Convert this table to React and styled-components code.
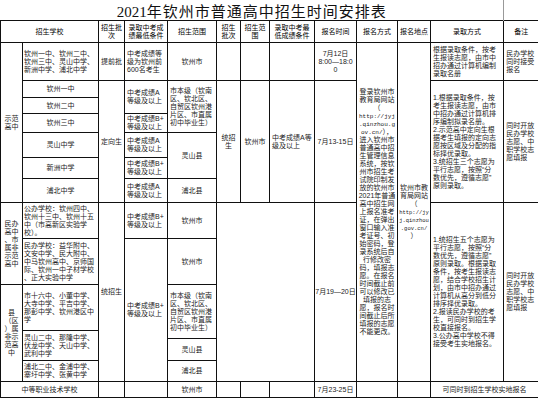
import { Fragment } from "react";
import styled, { createGlobalStyle } from "styled-components";

const GlobalStyle = createGlobalStyle`
body{
margin:0;
background:#fff;
}
`;

const Sheet = styled.table`
border-collapse:collapse;
table-layout:fixed;
width:538px;
font-family:"Liberation Sans","Noto Sans CJK SC",sans-serif;
font-size:7px;
line-height:8px;
color:#222;
`;

const Col = styled.col`
width:${(p) => p.$w}px;
`;

const Row = styled.tr`
height:${(p) => p.$h}px;
`;

const Cell = styled.td`
border:1px solid #111;
padding:0 ${(p) => (p.$pad ?? 2)}px;
text-align:${(p) => p.$align || "center"};
vertical-align:middle;
white-space:nowrap;
overflow:hidden;
`;

const Head = styled(Cell)`
color:#000;
`;

const TitleCell = styled.td`
border:none;
border-right:1px solid #999;
padding:5px 0 0;
text-align:center;
vertical-align:top;
font-family:"Liberation Serif","Noto Sans CJK SC",serif;
font-size:15px;
line-height:15px;
letter-spacing:1px;
color:#111;
`;

const BlankTitle = styled.td`
border:none;
`;

const Year = styled.span`
letter-spacing:0;
`;

const Url = styled.span`
font-family:"Liberation Mono",monospace;
font-size:${(p) => p.$size || 6}px;
line-height:6px;
`;

const lines = (arr) =>
  arr.map((t, i) => (
    <Fragment key={i}>
      {i > 0 && <br />}
      {t}
    </Fragment>
  ));

const widths = [22, 76, 26, 43, 49, 24, 29, 45, 42, 41, 33, 73, 35];

const signupWay = [
  "登录钦州市",
  "教育局网站",
  "（",
  <Url>http://jyj</Url>,
  <Url>.qinzhou.g</Url>,
  <><Url>ov.cn/</Url>），</>,
  "进入钦州市",
  "普通高中招",
  "生管理信息",
  "系统，按钦",
  "州市招生考",
  "试院印制发",
  "放的钦州市",
  "2021年普通",
  "高中招生网",
  "上报名准考",
  "证，在弹出",
  "窗口输入准",
  "考证号、初",
  "始密码，登",
  "录系统后自",
  "行修改密",
  "码，填报志",
  "愿。在报名",
  "时间截止前",
  "可以修改已",
  "填报的志",
  "愿，报名时",
  "间截止后所",
  "填报的志愿",
  "不能更改。",
];

const signupPlace = [
  "钦州市教",
  "育局网站",
  "（",
  <Url $size={5.5}>http://jy</Url>,
  <Url $size={5.5}>j.qinzhou</Url>,
  <Url $size={5.5}>.gov.cn/</Url>,
  "）",
];

const earlyRule = ["根据录取条件，按考", "生报读志愿，由市中", "招办通过计算机编制", "录取名册"];

const keyRule = [
  "1.根据录取条件，按",
  "考生报读志愿，由市",
  "中招办通过计算机排",
  "序编制拟录名册。",
  "2.示范高中定向生根",
  "据考生填报的定向志",
  "愿按区域及分配的指",
  "标择优录取。",
  "3.统招生三个志愿为",
  "平行志愿，按照“分",
  "数优先，遵循志愿”",
  "原则录取。",
];

const generalRule = [
  "1.统招生五个志愿为",
  "平行志愿，按照“分",
  "数优先，遵循志愿”",
  "原则录取。根据录取",
  "条件，按考生报读志",
  "愿，结合学校招生计",
  "划，由市中招办通过",
  "计算机从高分到低分",
  "排序择优录取。",
  "2.报读民办学校的考",
  "生，可同时到招生学",
  "校直接报名。",
  "3.公办高中学校不得",
  "接受考生实地报名。",
];

const openNote = ["同时开放", "民办学校", "志愿、中", "职学校志", "愿填报"];
const gradeA = ["中考成绩A", "等级及以上"];
const gradeB = ["中考成绩B+", "等级及以上"];
const cityLevel = ["市本级（钦南", "区、钦北区、", "自贸区钦州港", "片区、市直属", "初中毕业生）"];

function App() {
  return (
    <>
      <GlobalStyle />
      <Sheet>
        <colgroup>
          {widths.map((w, i) => (
            <Col key={i} $w={w} />
          ))}
        </colgroup>
        <tbody>
          <Row $h={20}>
            <TitleCell colSpan={12}>
              <Year>2021</Year>年钦州市普通高中招生时间安排表
            </TitleCell>
            <BlankTitle />
          </Row>

          <Row $h={22}>
            <Head colSpan={2}>招生学校</Head>
            <Head $pad={1}>{lines(["招生批", "次"])}</Head>
            <Head>{lines(["录取中考成", "绩最低条件"])}</Head>
            <Head>招生范围</Head>
            <Head $pad={1}>{lines(["招生", "批次"])}</Head>
            <Head $pad={1}>{lines(["招生范", "围"])}</Head>
            <Head>{lines(["录取中考最", "低成绩条件"])}</Head>
            <Head>报名时间</Head>
            <Head>报名方式</Head>
            <Head $pad={1}>报名地点</Head>
            <Head>录取方式</Head>
            <Head>备注</Head>
          </Row>

          <Row $h={38}>
            <Cell rowSpan={7}>{lines(["示范", "高中"])}</Cell>
            <Cell $align="left" $pad={1}>
              {lines(["钦州一中、钦州二中、", "钦州三中、灵山中学、", "新洲中学、浦北中学"])}
            </Cell>
            <Cell $pad={1}>提前批</Cell>
            <Cell $align="left">{lines(["中考成绩等", "级为钦州前", "600名考生"])}</Cell>
            <Cell>钦州市</Cell>
            <Cell />
            <Cell />
            <Cell />
            <Cell $pad={1}>{lines(["7月12日", "8:00—18:0", "0"])}</Cell>
            <Cell rowSpan={13} $pad={1}>{lines(signupWay)}</Cell>
            <Cell rowSpan={13} $pad={1}>{lines(signupPlace)}</Cell>
            <Cell $align="left">{lines(earlyRule)}</Cell>
            <Cell $align="left">{lines(["民办学校", "同时接受", "报名"])}</Cell>
          </Row>

          <Row $h={17}>
            <Cell>钦州一中</Cell>
            <Cell rowSpan={6} $pad={1}>定向生</Cell>
            <Cell rowSpan={2} $align="left">{lines(gradeA)}</Cell>
            <Cell rowSpan={3} $align="left">{lines(cityLevel)}</Cell>
            <Cell rowSpan={6}>{lines(["统招", "生"])}</Cell>
            <Cell rowSpan={6}>钦州市</Cell>
            <Cell rowSpan={6} $align="left">{lines(["中考成绩A等", "级及以上"])}</Cell>
            <Cell rowSpan={6} $pad={1}>7月13-15日</Cell>
            <Cell rowSpan={6} $align="left">{lines(keyRule)}</Cell>
            <Cell rowSpan={6} $align="left">{lines(openNote)}</Cell>
          </Row>

          <Row $h={16}>
            <Cell>钦州二中</Cell>
          </Row>

          <Row $h={19}>
            <Cell>钦州三中</Cell>
            <Cell $align="left">{lines(gradeB)}</Cell>
          </Row>

          <Row $h={25}>
            <Cell>灵山中学</Cell>
            <Cell $align="left">{lines(gradeA)}</Cell>
            <Cell rowSpan={2}>灵山县</Cell>
          </Row>

          <Row $h={21}>
            <Cell>新洲中学</Cell>
            <Cell $align="left">{lines(gradeB)}</Cell>
          </Row>

          <Row $h={24}>
            <Cell>浦北中学</Cell>
            <Cell $align="left">{lines(gradeA)}</Cell>
            <Cell>浦北县</Cell>
          </Row>

          <Row $h={36}>
            <Cell rowSpan={2}>{lines(["民办", "高中", "、市", "属非", "示范", "高中"])}</Cell>
            <Cell $align="left" $pad={1}>
              {lines(["公办学校：钦州四中、", "钦州十三中、钦州十五", "中（市高新区实验学", "校）。"])}
            </Cell>
            <Cell rowSpan={6} $pad={1}>统招生</Cell>
            <Cell $align="left">{lines(gradeB)}</Cell>
            <Cell>钦州市</Cell>
            <Cell rowSpan={6} colSpan={3} />
            <Cell rowSpan={6} $pad={0}>7月19—20日</Cell>
            <Cell rowSpan={6} $align="left">{lines(generalRule)}</Cell>
            <Cell rowSpan={6} $align="left">{lines(openNote)}</Cell>
          </Row>

          <Row $h={46}>
            <Cell $align="left" $pad={1}>
              {lines([
                "民办学校：益华附中、",
                "文安中学、民大附中、",
                "中马钦州高中、京师国",
                "际、钦州一中子材学校",
                "、正大实验中学",
              ])}
            </Cell>
            <Cell rowSpan={5} $align="left">{lines(gradeB)}</Cell>
            <Cell>钦州市</Cell>
          </Row>

          <Row $h={46}>
            <Cell rowSpan={4}>{lines(["县", "（区", "）属", "非示", "范高", "中"])}</Cell>
            <Cell $align="left" $pad={1}>
              {lines(["市十六中、小董中学、", "大寺中学、平吉中学、", "那彭中学、钦州港区中", "学"])}
            </Cell>
            <Cell rowSpan={2} $align="left">{lines(cityLevel)}</Cell>
          </Row>

          <Row $h={8}>
            <Cell rowSpan={2} $align="left" $pad={1}>
              {lines(["灵山二中、那隆中学、", "伏龙中学、天山中学、", "武利中学"])}
            </Cell>
          </Row>

          <Row $h={22}>
            <Cell>灵山县</Cell>
          </Row>

          <Row $h={21}>
            <Cell $align="left" $pad={1}>{lines(["浦北二中、金浦中学、", "寨圩中学、张黄中学"])}</Cell>
            <Cell>浦北县</Cell>
          </Row>

          <Row $h={16}>
            <Cell colSpan={2}>中等职业技术学校</Cell>
            <Cell />
            <Cell />
            <Cell>钦州市</Cell>
            <Cell />
            <Cell />
            <Cell />
            <Cell $pad={1}>7月23-25日</Cell>
            <Cell />
            <Cell />
            <Cell colSpan={2}>可同时到招生学校实地报名</Cell>
          </Row>
        </tbody>
      </Sheet>
    </>
  );
}

export default App;
